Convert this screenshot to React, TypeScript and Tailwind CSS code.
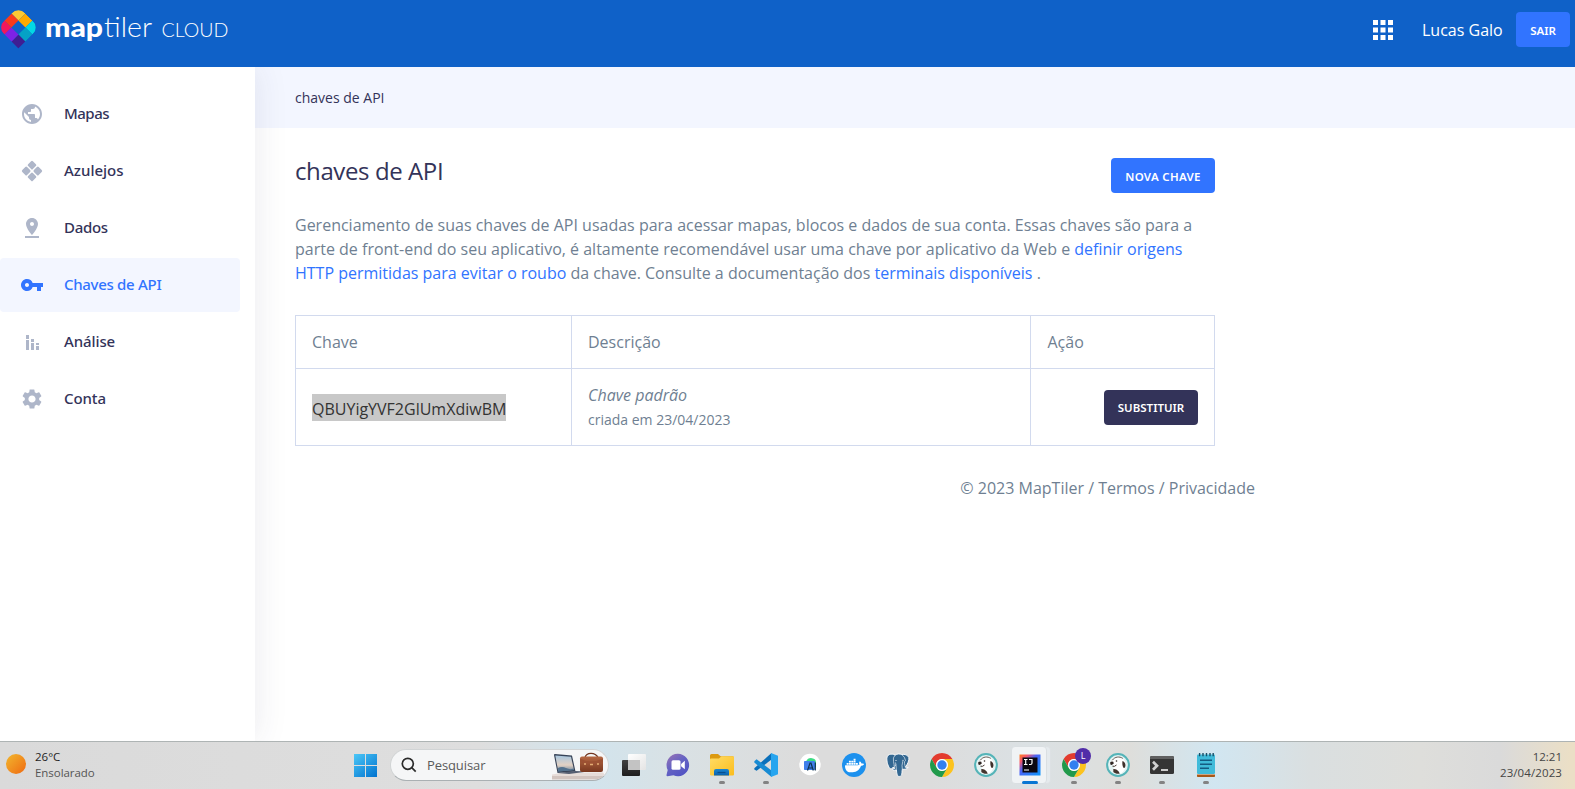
import type { ReactNode } from "react";
import { MdPublic, MdSettings } from "react-icons/md";
import { SiDocker } from "react-icons/si";

const openSans = "font-['Open_Sans','Noto_Sans',sans-serif]";
const notoSans = "font-['Noto_Sans','Open_Sans',sans-serif]";

function Logo() {
  const tiles: [number, number, string][] = [
    [0, 0, "#fbc935"],
    [1, 0, "#ffaa01"],
    [2, 0, "#03d8e4"],
    [2, 1, "#05a2c6"],
    [2, 2, "#3e1e93"],
    [1, 2, "#7d22e6"],
    [0, 2, "#f1175d"],
    [0, 1, "#fb3a1b"],
  ];
  return (
    <svg width="232" height="60" viewBox="0 0 232 60" className="block">
      <defs>
        <clipPath id="pin">
          <path d="M9 0H20A9 9 0 0 1 29 9V29H9A9 9 0 0 1 0 20V9A9 9 0 0 1 9 0Z" />
        </clipPath>
      </defs>
      <g transform="translate(18.4 6.4) rotate(45) scale(1.03)">
        <g clipPath="url(#pin)">
          {tiles.map(([c, r, fill]) => (
            <rect key={fill} x={c * 9.67} y={r * 9.67} width="9.7" height="9.7" fill={fill} />
          ))}
        </g>
      </g>
      <g fill="#fff" fontFamily="Lato, sans-serif">
        <text x="45" y="36.5" fontSize="27" fontWeight="900" textLength="58" lengthAdjust="spacingAndGlyphs">map</text>
        <text x="104" y="36.5" fontSize="27" fontWeight="300" textLength="48" lengthAdjust="spacingAndGlyphs">tiler</text>
        <text x="161.5" y="36.5" fontSize="19" fontWeight="300" textLength="67" lengthAdjust="spacingAndGlyphs">CLOUD</text>
      </g>
    </svg>
  );
}

function Glyph({ children }: { children: ReactNode }) {
  return (
    <svg width="24" height="24" viewBox="0 0 24 24" fill="currentColor">
      {children}
    </svg>
  );
}

const diamond = "M-.9-3.9a1.200 1.200 0 0 1 1.800 0L3.900-.9a1.200 1.200 0 0 1 0 1.800L.9 3.900a1.200 1.200 0 0 1-1.800 0L-3.900.9a1.200 1.200 0 0 1 0-1.800Z";

const menu: { label: string; icon: ReactNode; active?: boolean; spacing: string }[] = [
  { label: "Mapas", icon: <MdPublic size={24} />, spacing: "tracking-[-0.5px]" },
  {
    label: "Azulejos",
    spacing: "tracking-[0px]",
    icon: (
      <Glyph>
        <path d={diamond} transform="translate(12 6.2)" />
        <path d={diamond} transform="translate(12 17.8)" />
        <path d={diamond} transform="translate(6.2 12)" />
        <path d={diamond} transform="translate(17.8 12)" />
      </Glyph>
    ),
  },
  {
    label: "Dados",
    spacing: "tracking-[-0.3px]",
    icon: (
      <Glyph>
        <path d="M18 8c0-3.31-2.69-6-6-6S6 4.69 6 8c0 4.5 6 11 6 11s6-6.5 6-11zm-8 0c0-1.1.9-2 2-2s2 .9 2 2-.89 2-2 2c-1.1 0-2-.9-2-2zM5 20v2h14v-2H5z" />
      </Glyph>
    ),
  },
  {
    label: "Chaves de API",
    active: true,
    spacing: "tracking-[-0.3px]",
    icon: (
      <Glyph>
        <path d="M12.65 10A5.99 5.99 0 0 0 7 6c-3.31 0-6 2.69-6 6s2.69 6 6 6a5.99 5.99 0 0 0 5.65-4H17v4h4v-4h2v-4H12.65zM7 14c-1.1 0-2-.9-2-2s.9-2 2-2 2 .9 2 2-.9 2-2 2z" />
      </Glyph>
    ),
  },
  {
    label: "Análise",
    spacing: "tracking-[-0.1px]",
    icon: (
      <Glyph>
        <path d="M6 5h3v4H6zM6 10h3v10H6zM11 9h3v3h-3zM11 13h3v7h-3zM16 13h3v2h-3zM16 16h3v4h-3z" />
      </Glyph>
    ),
  },
  { label: "Conta", icon: <MdSettings size={24} />, spacing: "tracking-[-0.1px]" },
];

function Button({ children, className }: { children: ReactNode; className: string }) {
  return (
    <button
      className={`flex h-[35px] items-center justify-center rounded-[4px] text-[11.5px] font-semibold text-white ${notoSans} ${className}`}
    >
      {children}
    </button>
  );
}

function Header() {
  return (
    <header className="flex h-[67px] shrink-0 items-start justify-between bg-[#0f61c8]">
      <Logo />
      <div className="flex items-center pt-3 pr-[5px]">
        <svg width="20" height="20" viewBox="0 0 20 20" fill="#fff">
          <path d="M0 0h5v5H0zM7.5 0h5v5h-5zM15 0h5v5h-5zM0 7.5h5v5H0zM7.5 7.5h5v5h-5zM15 7.5h5v5h-5zM0 15h5v5H0zM7.5 15h5v5h-5zM15 15h5v5h-5z" />
        </svg>
        <span className="ml-[29px] w-[94px] text-base whitespace-nowrap text-white">Lucas Galo</span>
        <Button className="w-[54px] bg-[#3174ff] pt-[3px]">SAIR</Button>
      </div>
    </header>
  );
}

function Sidebar() {
  return (
    <nav className="relative z-10 flex w-[255px] shrink-0 flex-col gap-[3px] bg-white pt-5 pr-[15px] shadow-[0_0_32px_rgba(45,45,85,0.1)]">
      {menu.map((m) => (
        <a
          key={m.label}
          className={`flex h-[54px] items-center rounded-r-[4px] pl-5 ${m.active ? "rounded-l-[4px] bg-[#f3f6ff] text-[#3174ff]" : "text-[#333359]"}`}
        >
          <span className={m.active ? "text-[#3174ff]" : "text-[#aeb6c9]"}>{m.icon}</span>
          <span className={`ml-5 pb-[2px] text-[15px] font-medium ${notoSans} ${m.spacing}`}>{m.label}</span>
        </a>
      ))}
    </nav>
  );
}

function Content() {
  return (
    <main className="flex min-w-0 flex-1 flex-col">
      <div className="flex h-[61px] shrink-0 items-center bg-[#f3f6ff] pl-10 text-sm text-[#333359]">chaves de API</div>
      <div className="ml-10 w-[920px] pt-[30px]">
        <div className="flex h-[55px] items-start justify-between">
          <h1 className="-mt-[3px] text-2xl leading-8 tracking-[-0.4px] text-[#333359]">chaves de API</h1>
          <Button className="w-[104px] bg-[#3174ff] pt-[3px] tracking-[0.3px]">NOVA CHAVE</Button>
        </div>
        <p className="text-base leading-6 whitespace-nowrap">
          Gerenciamento de suas chaves de API usadas para acessar mapas, blocos e dados de sua conta. Essas chaves são para a
          <br />
          parte de front-end do seu aplicativo, é altamente recomendável usar uma chave por aplicativo da Web e{" "}
          <a className="text-[#3174ff]">definir origens</a>
          <br />
          <a className="text-[#3174ff]">HTTP permitidas para evitar o roubo</a> da chave. Consulte a documentação dos{" "}
          <a className="text-[#3174ff]">terminais disponíveis</a> .
        </p>
        <div className="mt-[30px] grid grid-cols-[276px_459px_184px] grid-rows-[53px_77px] border-t border-l border-[#d2daee] [&>div]:border-r [&>div]:border-b [&>div]:border-[#d2daee]">
          <div className="flex items-center pl-4">Chave</div>
          <div className="flex items-center pl-4">Descrição</div>
          <div className="flex items-center pl-[16.5px]">Ação</div>
          <div className="flex items-center pl-4">
            <span className="flex h-[27px] items-center bg-[#c8c8c8] pt-[3px] text-[#333]">QBUYigYVF2GlUmXdiwBM</span>
          </div>
          <div className="flex flex-col justify-center pl-4">
            <i className="leading-[26px]">Chave padrão</i>
            <span className="text-sm leading-6">criada em 23/04/2023</span>
          </div>
          <div className="flex items-center justify-end pr-4">
            <Button className="w-[94px] bg-[#333359] pt-px">SUBSTITUIR</Button>
          </div>
        </div>
      </div>
      <footer className="mt-[30px] flex w-[1000px] justify-end text-base leading-6">© 2023 MapTiler / Termos / Privacidade</footer>
    </main>
  );
}

function Chrome() {
  const arm = "M12 6H22.39A12 12 0 0 0 1.61 6L6.8 15A6 6 0 0 1 12 6Z";
  return (
    <svg width="24" height="24" viewBox="0 0 24 24">
      <path d={arm} fill="#e33b2e" />
      <path d={arm} fill="#fcc31e" transform="rotate(120 12 12)" />
      <path d={arm} fill="#219a4b" transform="rotate(240 12 12)" />
      <circle cx="12" cy="12" r="5.9" fill="#fff" />
      <circle cx="12" cy="12" r="4.7" fill="#3380f0" />
    </svg>
  );
}

function ChromeProfile() {
  return (
    <div className="relative h-6 w-6">
      <Chrome />
      <span className="absolute -top-[5px] left-[13px] flex h-4 w-4 items-center justify-center rounded-full bg-[#512da8] text-[9px] text-white">
        L
      </span>
    </div>
  );
}

function Beaver() {
  return (
    <svg width="24" height="24" viewBox="0 0 24 24">
      <circle cx="12" cy="12" r="10.9" fill="#e4f3f3" stroke="#55b4b8" strokeWidth="2" />
      <path d="M4.500 9.500C5.800 6 9 3.900 13 4.300c4 .5 6.600 3.300 6.600 7.200 0 3.500-1.500 6.800-4.100 8.500-2.500 1-5.500.7-8-1l.5-6.500-3.500-.5Z" fill="#fff" />
      <path d="M6.200 7.300C9 3.500 13.500 3.200 16.800 5.400" fill="none" stroke="#5a4a42" strokeWidth=".9" />
      <path d="M4.200 9.300Q5.500 7.800 7.300 8.800L7.800 10.600 5.800 12 4.300 11.500Z" fill="#2f2623" />
      <path d="M16.500 8c2.200.8 3.200 2.800 2.900 4.900-.2 1.200-.8 2-1.600 2.200-1.300-1.800-1.800-4.200-1.300-7.100Z" fill="#3e302b" />
      <path d="M7.300 16c2.200-.3 4.300.8 5.600 2.800l.8 1.900c-2.500.5-4.800-.1-6.400-1.600Z" fill="#43342e" />
      <path d="M6.500 13.200Q8.500 14 10.500 12" fill="none" stroke="#43342e" strokeWidth="1" />
      <circle cx="10.500" cy="8" r=".8" fill="#2f2623" />
    </svg>
  );
}

function TaskView() {
  return (
    <svg width="24" height="24" viewBox="0 0 24 24">
      <defs>
        <linearGradient id="tv" x2="0" y2="1"><stop stopColor="#414141" /><stop offset="1" stopColor="#1e1e1e" /></linearGradient>
        <linearGradient id="tw" x2="1" y2="1"><stop stopColor="#fff" /><stop offset="1" stopColor="#e4e4e4" /></linearGradient>
      </defs>
      <rect x="0" y="7" width="18" height="16" rx="1" fill="url(#tv)" />
      <rect x="6" y="1" width="18" height="16" rx="1" fill="url(#tw)" />
      <path d="M6 7h12v10H6z" fill="#c3c3c3" />
    </svg>
  );
}

function Meet() {
  return (
    <svg width="24" height="24" viewBox="0 0 24 24">
      <defs><linearGradient id="mt" x1="0" y1="0" x2=".7" y2="1"><stop stopColor="#9c74b4" /><stop offset=".5" stopColor="#6563c3" /><stop offset="1" stopColor="#5153c4" /></linearGradient></defs>
      <path d="M12 .8A11.200 11.200 0 1 1 7.500 22.300L1.500 23.300Q.3 23.300.5 22L1.700 17A11.200 11.200 0 0 1 12 .8Z" fill="url(#mt)" />
      <rect x="5.500" y="7.300" width="9" height="9.500" rx="1.500" fill="#fff" />
      <path d="M15.100 11 18.800 7.800V16.300L15.100 13.300Z" fill="#fff" />
    </svg>
  );
}

function Folder() {
  return (
    <svg width="24" height="24" viewBox="0 0 24 24">
      <defs>
        <linearGradient id="fo" x2="1" y2="1"><stop stopColor="#ffdc66" /><stop offset="1" stopColor="#fbbd1d" /></linearGradient>
        <linearGradient id="fb" x2="0" y2="1"><stop stopColor="#1b86cf" /><stop offset="1" stopColor="#0b62ad" /></linearGradient>
      </defs>
      <path d="M0 2.500Q0 1 1.500 1H8l2.500 2.200H22.500Q24 3.200 24 5V10H0Z" fill="#dc9a10" />
      <path d="M0 6.500Q0 5.500 1 5.500H9L11.500 3.200H23Q24 3.200 24 4.500V21.500Q24 22.500 22.800 22.500H1.200Q0 22.500 0 21.500Z" fill="url(#fo)" />
      <path d="M4 22.500V18Q4 16 6 16H17Q19 16 19 18V22.500Z" fill="url(#fb)" />
      <path d="M7.500 19.500H15.500" stroke="#084f8f" strokeWidth="1.200" />
    </svg>
  );
}

function Code() {
  return (
    <svg width="24" height="24" viewBox="0 0 24 24">
      <path d="M.3 15.300 17.500 0V6.600L2.600 17.800.3 16.500Z" fill="#0a70ba" />
      <path d="M.3 8.300 2.600 6.300 17.500 17.500V24L.3 9.600Z" fill="#178bd3" />
      <path d="M17 0 24 2.800V21.200L17 24Z" fill="#27a5ef" />
    </svg>
  );
}

function Studio() {
  return (
    <svg width="24" height="24" viewBox="0 0 24 24">
      <circle cx="12" cy="11.500" r="10.700" fill="#fff" />
      <path d="M8 8.500Q10 4.500 14 5.200T18 9v5H14Z" fill="#3ddc84" />
      <rect x="6" y="8" width="11" height="9" rx=".8" fill="#3f7fea" />
      <path d="M9.500 17.500 12 10H13L15.300 17.500M10.500 15H14.500M17.300 9.500V17.500" fill="none" stroke="#0e3350" strokeWidth="1.200" />
    </svg>
  );
}

function Docker() {
  return (
    <span className="flex h-6 w-6 items-center justify-center rounded-full bg-[#1d91ee]">
      <SiDocker size={19} color="#fff" />
    </span>
  );
}

function Postgres() {
  return (
    <svg width="24" height="24" viewBox="0 0 24 24">
      <path
        d="M3.500 1.500C1 2.200.5 5 1 8c.5 3.500 2 7.300 3.500 7.800 1 .3 1.700-.6 2.500-1.500l2 .7c-.6.8-2.200.8-2.500 1.500.7 1 2.500.8 3.900.3.4 2 .2 4.200 1 5.700.8 1.300 3.200 1.200 4-.1.7-1.400.5-4 .9-6.200 2 .4 5-.2 6-1.700-1 0-2.300.2-3-.3C21.500 11.500 23.500 7 22.800 4.500 21.900 2 18.500.8 15.800 1.600 13.800.7 11.300.7 9.200 2 7.500 1 5.200.9 3.500 1.500Z"
        fill="#336791"
        stroke="#fff"
        strokeWidth=".9"
      />
      <path d="M9.200 2Q6.500 4.500 7.500 8.500T8 13.500Q9.500 13.500 9.800 11.500M10.300 16.500Q10.200 12 9.500 9.500M15.800 1.600Q19 4 19.500 7.500 18 8.500 18.500 10.500T19.300 14M16.300 16Q15.500 13 16.800 8.200" fill="none" stroke="#e3ebf1" strokeWidth=".7" />
      <circle cx="10" cy="7.500" r=".6" fill="#fff" />
      <circle cx="17" cy="7.300" r=".6" fill="#fff" />
    </svg>
  );
}

function Idea() {
  return (
    <svg width="24" height="24" viewBox="0 0 24 24">
      <defs><linearGradient id="ij" x1="0" y1="0" x2="1" y2="1"><stop offset="0" stopColor="#fc801d" /><stop offset=".2" stopColor="#f8556b" /><stop offset=".42" stopColor="#4a63f6" /><stop offset="1" stopColor="#0a96fa" /></linearGradient></defs>
      <path d="M1.500 1.500H22.500V22.500H1.500Z" fill="url(#ij)" />
      <path d="M4.500 4.500H19.500V19.500H4.500Z" fill="#0b0710" />
      <path d="M6 6.500H9.500M7.700 6.500V11.500M6 11.500H9.500M11 6.500H14V10Q14 11.500 12.500 11.500H11M6 17H11" fill="none" stroke="#fff" strokeWidth="1.200" />
    </svg>
  );
}

function Terminal() {
  return (
    <svg width="24" height="24" viewBox="0 0 24 24">
      <rect y="3" width="24" height="18" rx="1.500" fill="#353535" />
      <path d="M0 6V4.500Q0 3 1.500 3H22.500Q24 3 24 4.500V6Z" fill="#606060" />
      <path d="M3 8.800 7 12.700 3 16.700" fill="none" stroke="#d1d1d1" strokeWidth="2.700" />
      <path d="M11 17H18" stroke="#fff" strokeWidth="1.500" />
    </svg>
  );
}

function Notepad() {
  return (
    <svg width="24" height="24" viewBox="0 0 24 24">
      <rect x="3" y="20" width="18" height="4" rx=".8" fill="#a95717" />
      <rect x="3" y="20" width="18" height="1.500" fill="#f4f4ee" />
      <rect x="3" y="1.500" width="18" height="19.500" rx="1" fill="#40bbda" />
      <path d="M5.600 0V3.200M9 0V3.200M12.500 0V3.200M16 0V3.200M19.200 0V3.200" stroke="#184f68" strokeWidth="1.400" />
      <path d="M6 7.300H18M6 11.300H18M6 15.300H15" stroke="#145b82" strokeWidth="1.500" />
    </svg>
  );
}

const apps: { id: string; icon: ReactNode; state?: "open" | "active" }[] = [
  { id: "views", icon: <TaskView /> },
  { id: "meet", icon: <Meet /> },
  { id: "files", icon: <Folder />, state: "open" },
  { id: "code", icon: <Code />, state: "open" },
  { id: "studio", icon: <Studio /> },
  { id: "docker", icon: <Docker /> },
  { id: "postgres", icon: <Postgres /> },
  { id: "chrome", icon: <Chrome /> },
  { id: "beaver", icon: <Beaver /> },
  { id: "idea", icon: <Idea />, state: "active" },
  { id: "profile", icon: <ChromeProfile />, state: "open" },
  { id: "beaver-open", icon: <Beaver />, state: "open" },
  { id: "terminal", icon: <Terminal />, state: "open" },
  { id: "notepad", icon: <Notepad />, state: "open" },
];

function SearchArt() {
  return (
    <svg width="54" height="29" viewBox="0 0 54 29">
      <defs>
        <linearGradient id="scr" x2="0" y2="1"><stop stopColor="#a9c7df" /><stop offset=".6" stopColor="#e2d1c4" /><stop offset="1" stopColor="#64809a" /></linearGradient>
        <linearGradient id="bag" x2="0" y2="1"><stop stopColor="#b66843" /><stop offset="1" stopColor="#78371f" /></linearGradient>
      </defs>
      <path d="M0 23.500 12 21.500H51L53 24 48 27H0Z" fill="#e6dcd8" />
      <path d="M0 25H52L48 28.500H0Z" fill="#d2c4bf" />
      <path d="M2 4Q2 3 3 3.100L20 4.500 23.500 20.500 5.500 22Z" fill="#384458" />
      <path d="M3.300 4.500 19 5.700 22 19 6.300 20.500Z" fill="url(#scr)" />
      <path d="M6 17Q10 15 14 17T21.500 17.500L22 19 6.300 20.500Z" fill="#52718e" />
      <path d="M5.500 22 23 20 36 20.500 17 23Z" fill="#555e71" />
      <path d="M33 6.500Q34 2.300 39 2.300T46 6.500" fill="none" stroke="#71351f" strokeWidth="1.300" />
      <rect x="28" y="5.500" width="23" height="15.500" rx="2" fill="url(#bag)" />
      <path d="M28 7.500Q39 13.500 51 7.500V11Q39 16 28 11Z" fill="#9c5133" />
      <path d="M33 12V14M46 12V14M38 13.500H41" stroke="#e4ac74" strokeWidth="1.500" />
    </svg>
  );
}

function Taskbar() {
  return (
    <div
      className={`flex h-12 shrink-0 items-center border-t border-[#aeb4b4] bg-[linear-gradient(90deg,#dadada_0px,#dedede_480px,#d2e4ed_590px,#d9e1e4_680px,#dcdcdc_800px,#dcdcdc_930px,#dbe1e4_1030px,#dededb_1130px,#d1e6f1_1215px,#dadfe0_1310px,#dededb_1420px,#dadada_1500px,#ebdfc6_1570px)] pb-px ${openSans}`}
    >
      <div className="flex w-[343px] items-center pb-px pl-1.5">
        <span className="-mt-px h-5 w-5 rounded-full bg-linear-to-br from-[#f0b62e] to-[#ee6810]" />
        <div className="ml-[9px] text-[11.5px] leading-4">
          <div className="text-[#1f1f1f]">26°C</div>
          <div className="tracking-[-0.05px] text-[#555]">Ensolarado</div>
        </div>
      </div>
      <div className="flex w-[47px] pl-[11px]">
        <svg width="23" height="23" viewBox="0 0 23 23">
          <defs><linearGradient id="win" gradientUnits="userSpaceOnUse" x1="0" y1="0" x2="20" y2="23"><stop stopColor="#4bc7f7" /><stop offset="1" stopColor="#0577d1" /></linearGradient></defs>
          <path d="M0 0H11V11H0ZM12 0H23V11H12ZM0 12H11V23H0ZM12 12H23V23H12Z" fill="url(#win)" />
        </svg>
      </div>
      <div className="mr-[3px] flex h-8 w-[219px] items-center overflow-hidden rounded-full border border-b-[#aab0b3] border-[#d1d4d5] bg-[#f5f6f7]">
        <svg width="16" height="16" viewBox="0 0 16 16" className="ml-[10px]" fill="none" stroke="#2b2b2b" strokeWidth="1.7">
          <circle cx="6.8" cy="6.8" r="5.5" />
          <path d="m10.7 10.7 4 4" />
        </svg>
        <span className="ml-[10px] w-[125px] pt-[2px] text-[13px] tracking-[-0.1px] text-[#5a5a5a]">Pesquisar</span>
        <SearchArt />
      </div>
      {apps.map((a) => (
        <div key={a.id} className="relative flex h-[46px] w-11 items-center justify-center">
          {a.state === "active" && (
            <>
              <span className="absolute top-1 left-[6px] h-[38px] w-[37px] rounded-[4px] border border-[#dde1e4] bg-[#e5eaed]" />
              <span className="absolute top-1 left-[3px] h-[38px] w-[36px] rounded-[4px] border border-[#dadfe2] bg-[#f0f3f5]" />
            </>
          )}
          <span className="relative">{a.icon}</span>
          {a.state && (
            <span
              className={
                a.state === "active"
                  ? "absolute top-[39px] left-[14px] h-[3px] w-4 rounded-full bg-[#0876d3]"
                  : "absolute top-[39px] left-[19px] h-[3px] w-1.5 rounded-full bg-[#838383]"
              }
            />
          )}
        </div>
      ))}
      <div className="ml-auto pr-[13px] pb-px text-right text-[11.5px] leading-4 text-[#454545]">
        <div>12:21</div>
        <div className="tracking-[0.1px]">23/04/2023</div>
      </div>
    </div>
  );
}

export default function App() {
  return (
    <div className={`flex h-[789px] w-[1575px] flex-col overflow-hidden bg-white text-[#6f7f92] ${openSans}`}>
      <Header />
      <div className="flex min-h-0 flex-1 overflow-hidden">
        <Sidebar />
        <Content />
      </div>
      <Taskbar />
    </div>
  );
}
